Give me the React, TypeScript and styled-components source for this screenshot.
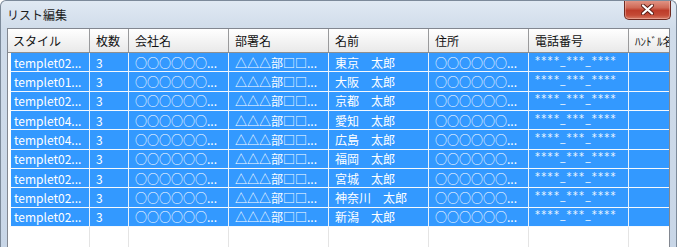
import React from 'react';
import styled, {createGlobalStyle} from 'styled-components';

const COLUMNS = '82px 39px 100px 100px 100px 100px 100px 100px';

type RowData = {
    style: string;
    name: string;
};

const rows: RowData[] = [
    {style: 'templet02...', name: '東京　太郎'},
    {style: 'templet01...', name: '大阪　太郎'},
    {style: 'templet02...', name: '京都　太郎'},
    {style: 'templet04...', name: '愛知　太郎'},
    {style: 'templet04...', name: '広島　太郎'},
    {style: 'templet02...', name: '福岡　太郎'},
    {style: 'templet02...', name: '宮城　太郎'},
    {style: 'templet02...', name: '神奈川　太郎'},
    {style: 'templet02...', name: '新潟　太郎'},
];

const headers = ['スタイル', '枚数', '会社名', '部署名', '名前', '住所', '電話番号', 'ﾊﾝﾄﾞﾙ名'];

export default function App() {
    return (
        <>
            <GlobalStyle/>
            <Window>
                <TitleBar>
                    <Title>リスト編集</Title>
                    <CloseButton aria-label="close">
                        <svg width="13" height="11" viewBox="0 0 13 11">
                            <path d="M2 1.5 L11 9.5 M11 1.5 L2 9.5" stroke="#5a1d16" strokeWidth="4"
                                  strokeLinecap="round"/>
                            <path d="M2 1.5 L11 9.5 M11 1.5 L2 9.5" stroke="#ffffff" strokeWidth="2.2"
                                  strokeLinecap="round"/>
                        </svg>
                    </CloseButton>
                </TitleBar>
                <Body>
                    <ListView>
                        <HeaderRow>
                            {headers.map((h, i) => (
                                <HeaderCell key={h} $first={i === 0} $narrow={i === 7}>{h}</HeaderCell>
                            ))}
                        </HeaderRow>
                        {rows.map((r, i) => (
                            <Row key={i}>
                                <Cell $first>{r.style}</Cell>
                                <Cell>3</Cell>
                                <Cell>○○○○○○...</Cell>
                                <Cell>△△△部□□...</Cell>
                                <Cell>{r.name}</Cell>
                                <Cell>○○○○○○...</Cell>
                                <Cell><Phone>****_***_****</Phone></Cell>
                                <Cell/>
                            </Row>
                        ))}
                        <Filler>
                            {headers.map((h, i) => <FillerCell key={h} $first={i === 0}/>)}
                        </Filler>
                    </ListView>
                </Body>
            </Window>
        </>
    );
}

const GlobalStyle = createGlobalStyle`
    html, body {
        margin: 0;
        padding: 0;
        background: #ffffff;
    }

    body {
        font-family: "Noto Sans CJK JP", "Noto Sans", sans-serif;
    }
`;

const Window = styled.div`
    width: 677px;
    height: 247px;
    box-sizing: border-box;
    display: flex;
    flex-direction: column;
    background: linear-gradient(#e0e9f3, #d0dcea 28px, #c8d6e7);
    border: 1px solid #7c8a9a;
    border-bottom: none;
    border-radius: 6px 6px 0 0;
    overflow: hidden;
`;

const TitleBar = styled.div`
    height: 27px;
    flex-shrink: 0;
    display: flex;
    align-items: flex-start;
    justify-content: space-between;
    padding: 0 5px 0 6px;
`;

const Title = styled.span`
    margin-top: 5px;
    font-size: 12px;
    line-height: 17px;
    color: #1b1b1b;
`;

const CloseButton = styled.button`
    width: 47px;
    height: 20px;
    margin-top: -1px;
    padding: 0;
    display: flex;
    align-items: center;
    justify-content: center;
    border: 1px solid #6e2a21;
    border-top: none;
    border-radius: 0 0 5px 5px;
    background: linear-gradient(#e3998a, #d06a57 40%, #bd3c2a 55%, #c44a36 80%, #d77c67);
    box-shadow: inset 0 0 0 1px rgba(255, 210, 200, 0.4);
`;

const Body = styled.div`
    flex: 1;
    min-height: 0;
    display: flex;
    padding: 0 6px;
`;

const ListView = styled.div`
    flex: 1;
    min-width: 0;
    display: flex;
    flex-direction: column;
    background: #ffffff;
    border: 1px solid #828790;
    border-bottom: none;
    overflow: hidden;
`;

const HeaderRow = styled.div`
    display: grid;
    grid-template-columns: ${COLUMNS};
    height: 24px;
    flex-shrink: 0;
    box-sizing: border-box;
    border-bottom: 1px solid #8e8f8f;
    background: linear-gradient(#ffffff, #f5f5f5 45%, #e9e9e9);
`;

const HeaderCell = styled.div<{ $first?: boolean; $narrow?: boolean }>`
    box-sizing: border-box;
    border-right: 1px solid #999a9c;
    padding-left: ${p => (p.$first ? 5 : 6)}px;
    display: flex;
    align-items: center;
    font-size: ${p => (p.$narrow ? 11 : 12)}px;
    color: #111111;
    white-space: nowrap;
    overflow: hidden;
`;

const Row = styled.div`
    display: grid;
    grid-template-columns: ${COLUMNS};
    height: 19.35px;
    flex-shrink: 0;
`;

const Cell = styled.div<{ $first?: boolean }>`
    box-sizing: border-box;
    background: #3399ff;
    border-right: 1px solid #e7f1fd;
    border-bottom: 1px solid #f5f9fe;
    border-left: ${p => (p.$first ? '3px solid #ffffff' : 'none')};
    padding-left: ${p => (p.$first ? 3 : 6)}px;
    display: flex;
    align-items: center;
    font-size: 12px;
    color: #ffffff;
    white-space: nowrap;
    overflow: hidden;
`;

const Phone = styled.span`
    font-family: "DejaVu Sans", sans-serif;
    font-size: 10px;
    letter-spacing: 1.3px;
    margin-top: -4px;
    color: #eef6ff;
`;

const Filler = styled.div`
    flex: 1;
    display: grid;
    grid-template-columns: ${COLUMNS};
`;

const FillerCell = styled.div<{ $first?: boolean }>`
    box-sizing: border-box;
    border-right: 1px solid #e4e4e4;
`;
